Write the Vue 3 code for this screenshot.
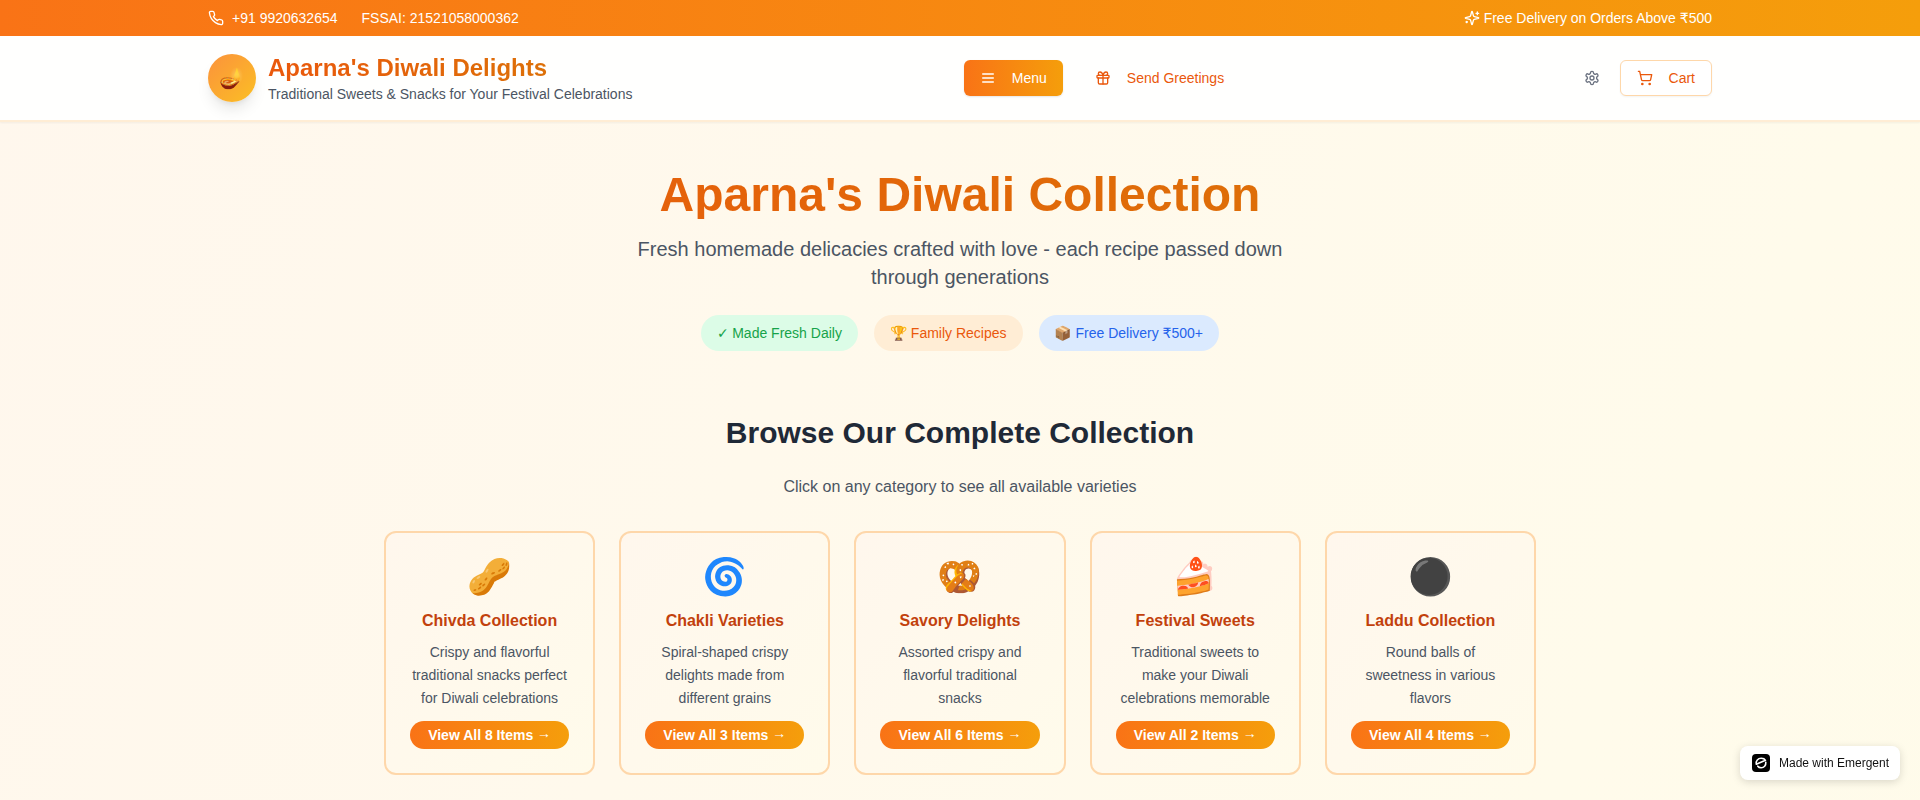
<script setup>
const pills = [
  { mark: '✓', text: 'Made Fresh Daily', tone: 'green' },
  { mark: '🏆', text: 'Family Recipes', tone: 'orange' },
  { mark: '📦', text: 'Free Delivery ₹500+', tone: 'blue' },
]
const categories = [
  { icon: '🥜', name: 'Chivda Collection', text: 'Crispy and flavorful traditional snacks perfect for Diwali celebrations', count: 8 },
  { icon: '🌀', name: 'Chakli Varieties', text: 'Spiral-shaped crispy delights made from different grains', count: 3 },
  { icon: '🥨', name: 'Savory Delights', text: 'Assorted crispy and flavorful traditional snacks', count: 6 },
  { icon: '🍰', name: 'Festival Sweets', text: 'Traditional sweets to make your Diwali celebrations memorable', count: 2 },
  { icon: '⚫', name: 'Laddu Collection', text: 'Round balls of sweetness in various flavors', count: 4 },
]
</script>

<template>
  <div class="page">
    <div class="topbar">
      <div class="container bar-row">
        <div class="contact">
          <span class="phone">
            <svg class="icon" viewBox="0 0 24 24"><path d="M22 16.92v3a2 2 0 0 1-2.18 2 19.79 19.79 0 0 1-8.63-3.07 19.5 19.5 0 0 1-6-6 19.79 19.79 0 0 1-3.07-8.67A2 2 0 0 1 4.11 2h3a2 2 0 0 1 2 1.72 12.84 12.84 0 0 0 .7 2.81 2 2 0 0 1-.45 2.11L8.09 9.91a16 16 0 0 0 6 6l1.27-1.27a2 2 0 0 1 2.11-.45 12.84 12.84 0 0 0 2.81.7A2 2 0 0 1 22 16.92z" /></svg>
            <span>+91 9920632654</span>
          </span>
          <span>FSSAI: 21521058000362</span>
        </div>
        <div class="offer">
          <svg class="icon" viewBox="0 0 24 24"><path d="M9.937 15.5A2 2 0 0 0 8.5 14.063l-6.135-1.582a.5.5 0 0 1 0-.962L8.5 9.936A2 2 0 0 0 9.937 8.5l1.582-6.135a.5.5 0 0 1 .963 0L14.063 8.5A2 2 0 0 0 15.5 9.937l6.135 1.581a.5.5 0 0 1 0 .964L15.5 14.063a2 2 0 0 0-1.437 1.437l-1.582 6.135a.5.5 0 0 1-.963 0z" /><path d="M20 3v4" /><path d="M22 5h-4" /><path d="M4 17v2" /><path d="M5 18H3" /></svg>
          <span>Free Delivery on Orders Above ₹500</span>
        </div>
      </div>
    </div>

    <header class="header">
      <div class="container header-row">
        <div class="brand">
          <div class="logo">🪔</div>
          <div>
            <div class="brand-name">Aparna's Diwali Delights</div>
            <p class="tagline">Traditional Sweets &amp; Snacks for Your Festival Celebrations</p>
          </div>
        </div>
        <nav class="nav">
          <button class="btn primary">
            <svg class="icon" viewBox="0 0 24 24"><path d="M4 6h16" /><path d="M4 12h16" /><path d="M4 18h16" /></svg>
            Menu
          </button>
          <button class="btn ghost">
            <svg class="icon" viewBox="0 0 24 24"><rect x="3" y="8" width="18" height="4" rx="1" /><path d="M12 8v13" /><path d="M19 12v7a2 2 0 0 1-2 2H7a2 2 0 0 1-2-2v-7" /><path d="M7.5 8a2.5 2.5 0 0 1 0-5A4.8 8 0 0 1 12 8a4.8 8 0 0 1 4.5-5 2.5 2.5 0 0 1 0 5" /></svg>
            Send Greetings
          </button>
        </nav>
        <div class="actions">
          <button class="btn gear" aria-label="Settings">
            <svg class="icon" viewBox="0 0 24 24"><path d="M12.22 2h-.44a2 2 0 0 0-2 2v.18a2 2 0 0 1-1 1.73l-.43.25a2 2 0 0 1-2 0l-.15-.08a2 2 0 0 0-2.73.73l-.22.38a2 2 0 0 0 .73 2.73l.15.1a2 2 0 0 1 1 1.72v.51a2 2 0 0 1-1 1.74l-.15.09a2 2 0 0 0-.73 2.73l.22.38a2 2 0 0 0 2.73.73l.15-.08a2 2 0 0 1 2 0l.43.25a2 2 0 0 1 1 1.73V20a2 2 0 0 0 2 2h.44a2 2 0 0 0 2-2v-.18a2 2 0 0 1 1-1.73l.43-.25a2 2 0 0 1 2 0l.15.08a2 2 0 0 0 2.73-.73l.22-.39a2 2 0 0 0-.73-2.73l-.15-.08a2 2 0 0 1-1-1.74v-.5a2 2 0 0 1 1-1.74l.15-.09a2 2 0 0 0 .73-2.73l-.22-.38a2 2 0 0 0-2.73-.73l-.15.08a2 2 0 0 1-2 0l-.43-.25a2 2 0 0 1-1-1.73V4a2 2 0 0 0-2-2z" /><circle cx="12" cy="12" r="3" /></svg>
          </button>
          <button class="btn cart">
            <svg class="icon" viewBox="0 0 24 24"><circle cx="8" cy="21" r="1" /><circle cx="19" cy="21" r="1" /><path d="M2.05 2.05h2l2.66 12.42a2 2 0 0 0 2 1.58h9.78a2 2 0 0 0 1.95-1.57l1.65-7.43H5.12" /></svg>
            Cart
          </button>
        </div>
      </div>
    </header>

    <main class="container main">
      <section class="hero">
        <h1>Aparna's Diwali Collection</h1>
        <p class="lead">Fresh homemade delicacies crafted with love - each recipe passed down through generations</p>
        <div class="pills">
          <span v-for="p in pills" :key="p.tone" class="pill" :class="p.tone"><span class="pill-mark">{{ p.mark }}</span> {{ p.text }}</span>
        </div>
      </section>

      <section class="browse">
        <h2>Browse Our Complete Collection</h2>
        <p class="hint">Click on any category to see all available varieties</p>
        <div class="grid">
          <article v-for="c in categories" :key="c.name" class="card">
            <div class="emoji">{{ c.icon }}</div>
            <h3>{{ c.name }}</h3>
            <p>{{ c.text }}</p>
            <div class="view">View All {{ c.count }} Items <span class="arrow">→</span></div>
          </article>
        </div>
      </section>
    </main>

    <a class="badge">
      <svg class="mark" viewBox="0 0 20 20">
        <rect x="1" y="1" width="18" height="18" rx="4" fill="#000" />
        <g fill="none" stroke="#fff" stroke-width="1.6" stroke-linecap="round" stroke-linejoin="round">
          <path d="M5.3 11.2C4.6 7.800 7 5.300 10.200 5.300c2.200 0 3.600.8 4.300 2L5.300 11.200" />
          <path d="M14.800 9.300c.3 3.200-1.800 5.400-4.700 5.400-1.500 0-2.600-.5-3.300-1.500" />
        </g>
      </svg>
      <span>Made with Emergent</span>
    </a>
  </div>
</template>

<style>
body { margin: 0; overflow: hidden; }
</style>

<style scoped>
.page {
  height: 800px;
  overflow: hidden;
  font-family: "Liberation Sans", "DejaVu Sans", "Noto Color Emoji", sans-serif;
  font-size: 16px;
  line-height: 24px;
  background: linear-gradient(to bottom right, #fff7ed, #fffbeb, #fefce8) 0 0 / 100% 4200px no-repeat;
}
.page *, .page { box-sizing: border-box; }
h1, h2, h3, p { margin: 0; }
.container { width: 1536px; margin: 0 auto; padding: 0 16px; }
.icon {
  width: 16px; height: 16px; flex: none;
  fill: none; stroke: currentColor; stroke-width: 2;
  stroke-linecap: round; stroke-linejoin: round;
}
.topbar {
  background: linear-gradient(to right, #f97316, #f59e0b);
  color: #fff; font-size: 14px; line-height: 20px; padding: 8px 0;
}
.bar-row, .header-row { display: flex; align-items: center; justify-content: space-between; }
.contact { display: flex; align-items: center; gap: 24px; }
.phone { display: flex; align-items: center; gap: 8px; }
.offer { display: flex; align-items: center; gap: 4px; }
.header {
  background: rgba(255, 255, 255, .95);
  border-bottom: 2px solid #ffedd5;
  box-shadow: 0 1px 2px rgba(0, 0, 0, .05);
  padding: 16px 0;
}
.brand { display: flex; align-items: center; gap: 12px; }
.logo {
  width: 48px; height: 48px; border-radius: 50%;
  display: flex; align-items: center; justify-content: center;
  font-size: 20px; line-height: 28px; color: #fff;
  background: linear-gradient(to bottom right, #fb923c, #fbbf24);
  box-shadow: 0 10px 15px -3px rgba(0, 0, 0, .1), 0 4px 6px -4px rgba(0, 0, 0, .1);
}
.brand-name {
  font-size: 24px; line-height: 32px; font-weight: 700;
  background: linear-gradient(to right, #ea580c, #d97706);
  -webkit-background-clip: text; background-clip: text; color: transparent;
}
.tagline { font-size: 14px; line-height: 20px; color: #4b5563; }
.nav { display: flex; gap: 16px; }
.actions { display: flex; gap: 8px; align-items: center; }
.btn {
  display: inline-flex; align-items: center; justify-content: center; gap: 16px;
  height: 36px; padding: 0 16px; border: 0; border-radius: 6px; margin: 0;
  font: 400 14px/20px "Liberation Sans", Arial, sans-serif;
  background: transparent; color: #ea580c; white-space: nowrap;
}
.primary {
  background: linear-gradient(to right, #f97316, #f59e0b); color: #fff;
  box-shadow: 0 1px 2px rgba(0, 0, 0, .1);
}
.gear { padding: 0 12px; color: #6b7280; }
.cart { border: 1px solid #fed7aa; background: #fff; box-shadow: 0 1px 2px rgba(0, 0, 0, .05); }
.main { padding-top: 49px; text-align: center; }
.hero { margin-bottom: 64px; }
h1 {
  font-size: 48px; line-height: 48px; font-weight: 700; margin-bottom: 16px;
  background: linear-gradient(to right, #ea580c, #d97706);
  -webkit-background-clip: text; background-clip: text; color: transparent;
}
.lead { width: 672px; margin: 0 auto 24px; font-size: 20px; line-height: 28px; color: #4b5563; }
.pills { display: flex; justify-content: center; gap: 16px; font-size: 14px; line-height: 20px; }
.pill { padding: 8px 16px; border-radius: 9999px; }
.pill-mark { margin-right: -.4px; }
.green { background: #dcfce7; color: #16a34a; }
.orange { background: #ffedd5; color: #ea580c; }
.blue { background: #dbeafe; color: #2563eb; }
h2 { font-size: 30px; line-height: 36px; font-weight: 700; color: #1f2937; margin-bottom: 24px; }
.hint { color: #4b5563; margin-bottom: 32px; }
.grid { width: 1152px; margin: 0 auto; display: grid; grid-template-columns: repeat(5, 1fr); gap: 24px; }
.card {
  border: 2px solid #fed7aa; border-radius: 12px; padding: 24px;
  background: linear-gradient(to bottom right, #fff7ed, #fffbeb);
}
.emoji { font-family: "Liberation Sans", "Noto Color Emoji", sans-serif; font-size: 36px; line-height: 40px; margin-bottom: 12px; }
h3 { font-size: 16px; line-height: 24px; font-weight: 700; color: #c2410c; margin-bottom: 8px; }
.card p { font-size: 14px; line-height: 22.75px; color: #4b5563; margin-bottom: 12px; }
.view {
  padding: 4px 12px; border-radius: 9999px; color: #fff;
  font-size: 14px; line-height: 20px; font-weight: 700; white-space: nowrap;
  background: linear-gradient(to right, #f97316, #f59e0b);
}
.arrow { line-height: 0; vertical-align: 2px; }
.badge {
  position: fixed; right: 20px; bottom: 20px; height: 34px; width: 160px;
  display: flex; align-items: center; gap: 8px; padding: 0 11px;
  background: #fff; border-radius: 8px; color: #111;
  font-size: 12px; line-height: 16px; white-space: nowrap;
  box-shadow: 0 2px 8px rgba(0, 0, 0, .15);
}
.mark { width: 20px; height: 20px; flex: none; }
</style>
